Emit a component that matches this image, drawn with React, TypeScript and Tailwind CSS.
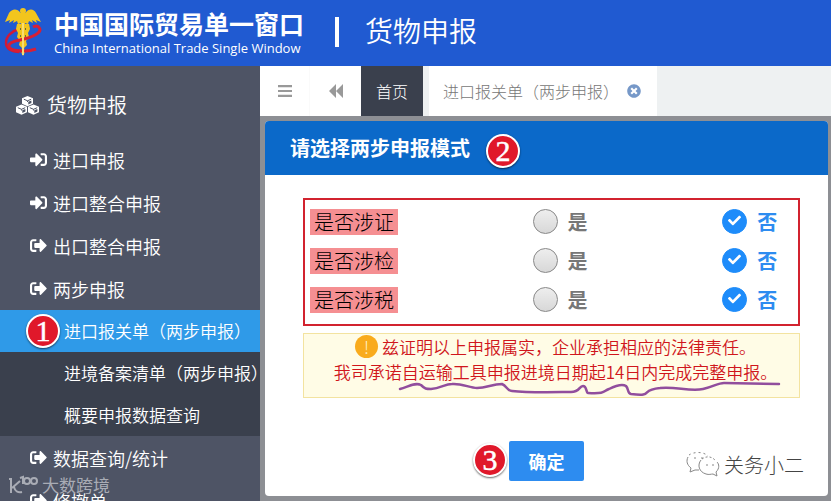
import { useState } from "react";
import { FaCheck, FaSignInAlt, FaSignOutAlt, FaTimesCircle } from "react-icons/fa";

const subMenu = ["进口报关单（两步申报）", "进境备案清单（两步申报）", "概要申报数据查询"];

const questions = [
    { id: "cert", label: "是否涉证" },
    { id: "inspection", label: "是否涉检" },
    { id: "tax", label: "是否涉税" },
];

const Logo = () => (
    <svg viewBox="0 0 38 50" className="w-[38px] h-[50px] shrink-0" fill="none">
        <path d="M15 22C8 24 2 29 2 36c0 6 6 9 13 9" stroke="#cf1a38" strokeWidth="2.5" />
        <path fill="#f2c51d" d="M16.500 6C13 1 8 2 5 6L1 15l5-2-1 3 5-3-1 3 4-2 1 3 3-1v6h4v-6l3 1 1-3 4 2-1-3 5 3-1-3 5 2-5-9C30 2 25 1 21.500 6z" />
        <circle cx="19" cy="4" r="3" fill="#f2c51d" />
        <path fill="#f2c51d" d="M13 17h12l1 5-2 4 1 4-3 4 1 4-3 3 1 4-2 4-2-4 1-4-3-3 1-4-3-4 1-4-2-4z" />
        <path d="M29 20c6-3 9 3 5 6-4 4-10 5-18 7-8 1-12 4-11 7 2 4 9 4 16 4 5 0 8-1 11-2" stroke="#d81f35" strokeWidth="3" />
        <path d="M16 22h1M21 22h1M16 29h1M21 29h1M19 36v2" stroke="#6a6a3c" strokeWidth="2" />
        <path d="M19 16v32" stroke="#f8dd72" strokeWidth="2" />
    </svg>
);

const Cube = ({ x, y }: { x: number, y: number }) => (
    <g transform={`translate(${x} ${y})`}>
        <path fill="white" d="M5.500 0L11 2.300V7.700L5.500 10.300L0 7.700V2.300z" />
        <path stroke="#4e5465" strokeWidth="1" d="M1.800 3.200L5.500 4.800L9.200 3.200M5.500 4.800V6" />
        <path fill="#4e5465" d="M6.300 5.800L9.400 4.500V7L6.300 8.500z" />
    </g>
);

const CubesIcon = () => (
    <svg viewBox="0 0 23 19" className="w-[23px] h-[19px]" fill="none">
        <Cube x={6} y={0} />
        <Cube x={0} y={8.5} />
        <Cube x={12} y={8.5} />
    </svg>
);

const Badge = ({ n, className }: { n: number, className: string }) => (
    <span className={`flex items-center justify-center w-[34px] h-[34px] rounded-full border-2 border-white bg-[#e0182a] text-white text-[30px] leading-none font-['Liberation_Serif',serif] shadow-[0_1px_2px_rgba(0,0,0,0.6)] [-webkit-text-stroke:0.5px_white] ${className}`}>{n}</span>
);

const WeChatIcon = () => (
    <svg viewBox="0 0 34 28" className="w-[34px] h-7" fill="none" stroke="#888" strokeWidth="1">
        <path d="M2 6C0 10 1 14 5 17l-1 4 5-2 4 0" />
        <path d="M3 4C7 1 17 0 22 5" strokeDasharray="2 3" />
        <path d="M15 9c-4 5-2 12 5 14 3 1 5 0 7 0l4 2-1-4c4-4 3-8 1-10" />
        <path d="M16 8c4-3 9-3 13 1" strokeDasharray="2 2" />
        <path d="M8 7h2M15 7h2M20 14h2M26 14h2" />
    </svg>
);

const MenuItem = ({ label, out }: { label: string, out?: boolean }) => (
    <a href="#" className="flex items-center gap-1.5 h-[43px] pl-[30px] text-lg font-[350] whitespace-nowrap">
        {out ? <FaSignOutAlt className="w-[17px] h-[17px]" /> : <FaSignInAlt className="w-[17px] h-[17px]" />}
        {label}
    </a>
);

const Sidebar = () => (
    <aside className="w-[260px] shrink-0 bg-[#4e5465] text-white overflow-hidden">
        <h2 className="flex items-center gap-2 h-[72px] pt-1.5 pl-4 text-xl font-[350]">
            <CubesIcon />
            货物申报
        </h2>
        <nav>
            <MenuItem label="进口申报" />
            <MenuItem label="进口整合申报" />
            <MenuItem label="出口整合申报" out />
            <MenuItem label="两步申报" out />
            <ul className="bg-[#3a404d]">
                {subMenu.map((label, i) => (
                    <li key={label} className={i === 0 ? "relative bg-[#2f9ae8]" : ""}>
                        {i === 0 && <Badge n={1} className="absolute left-[26px] top-1" />}
                        <a href="#" className="flex items-center h-[42px] pl-16 text-[17px] font-[350] whitespace-nowrap">{label}</a>
                    </li>
                ))}
            </ul>
            <MenuItem label="数据查询/统计" out />
            <MenuItem label="修撤单" out />
        </nav>
    </aside>
);

const Tabs = () => (
    <div className="flex h-[50px] shrink-0 bg-[#eef1f2] text-base text-[#777]">
        <button aria-label="菜单" className="flex items-center justify-center w-[50px] bg-white border-r border-[#fafafa]">
            <svg viewBox="0 0 14 12" className="w-3.5 h-3" fill="#999">
                <path d="M0 0h14v2.200H0zM0 4.900h14v2.200H0zM0 9.800h14V12H0z" />
            </svg>
        </button>
        <button aria-label="向左" className="flex items-center justify-center w-[51px] bg-white">
            <svg viewBox="0 0 14 14" className="w-3.5 h-3.5" fill="#999">
                <path d="M7 0v14L0 7zM14 0v14L7 7z" />
            </svg>
        </button>
        <button className="px-[15px] bg-[#3a404d] font-light text-white">首页</button>
        <div className="flex items-center gap-2 ml-1.5 pl-3.5 pr-4 bg-white font-light whitespace-nowrap">
            <a href="#">进口报关单（两步申报）</a>
            <button aria-label="关闭" className="text-[#7698c8]"><FaTimesCircle className="w-3.5 h-3.5" /></button>
        </div>
    </div>
);

const Option = ({ name, label, checked, onChange }: { name: string, label: string, checked: boolean, onChange: () => void }) => (
    <label className={`flex items-center gap-2.5 text-xl font-bold ${checked ? "text-[#2d8cf0]" : "text-[#777]"}`}>
        <span className="relative flex">
            <input
                type="radio"
                name={name}
                checked={checked}
                onChange={onChange}
                className="appearance-none w-[25px] h-[25px] rounded-full border border-[#888] bg-linear-to-b from-[#eee] to-[#d8d8d8] checked:border-[#1e8cfa] checked:bg-none checked:bg-[#1e8cfa]"
            />
            {checked && <FaCheck className="absolute left-1.5 top-[5px] w-[13px] h-[13px] text-white pointer-events-none" />}
        </span>
        {label}
    </label>
);

const Dialog = () => {
    const [answers, setAnswers] = useState<Record<string, boolean>>({ cert: false, inspection: false, tax: false });

    return (
        <section className="relative flex-1 flex flex-col rounded-sm bg-white overflow-hidden">
            <header className="flex items-center gap-4 h-[54px] pl-[25px] bg-[#0b69c9] text-white">
                <h1 className="text-xl font-bold">请选择两步申报模式</h1>
                <Badge n={2} className="mt-1.5" />
            </header>

            <form className="pt-[23px] pl-[38px] pr-7" onSubmit={(e) => e.preventDefault()}>
                <div className="border-2 border-[#d2232f] pt-0.5 pb-[5px]">
                    {questions.map((q) => (
                        <div key={q.id} role="radiogroup" aria-label={q.label} className="grid grid-cols-[6fr_5fr_2fr] items-center h-[39px]">
                            <div className="flex pl-[5px]">
                                <span className="px-1 bg-[#f58f92] text-xl leading-[26px] font-light text-black">{q.label}</span>
                            </div>
                            <Option name={q.id} label="是" checked={answers[q.id]} onChange={() => setAnswers({ ...answers, [q.id]: true })} />
                            <Option name={q.id} label="否" checked={!answers[q.id]} onChange={() => setAnswers({ ...answers, [q.id]: false })} />
                        </div>
                    ))}
                </div>

                <div className="relative mt-[7px] pb-[13px] pl-2 border border-[#f3e3a0] bg-[#fffce6] text-center text-[17px] leading-[25px] font-[350] text-[#d0161c] whitespace-nowrap">
                    <p className="flex items-center justify-center gap-1">
                        <span className="flex items-center justify-center w-[23px] h-[23px] rounded-full bg-[#f9ab1c] font-light text-[#fff3d0]">!</span>
                        兹证明以上申报属实，企业承担相应的法律责任。
                    </p>
                    <p>我司承诺自运输工具申报进境日期起14日内完成完整申报。</p>
                    {/* Traço à mão livre sob o compromisso */}
                    <svg viewBox="398 380 383 18" className="absolute left-[94px] top-[46px] w-[383px] h-[18px]" fill="none" stroke="#914e9d" strokeWidth="2.5" strokeLinecap="round">
                        <path d="M400 389C408 387 415 382 421 385C425 389 426 389 431 389C441 388 445 384 452 384C461 383 470 388 477 388C487 388 492 384 502 384C507 386 507 391 512 391C530 393 560 392 571 392C580 392 579 386 583 386C587 386 586 393 588 393C607 394 603 391 609 389C617 385 623 384 626 386C629 389 627 393 631 394C655 397 639 390 660 388C675 386 690 392 703 389C713 387 718 383 724 383L779 384" />
                    </svg>
                </div>

                <div className="flex justify-center pt-[43px] pr-2.5">
                    <div className="relative">
                        <Badge n={3} className="absolute -left-9 top-0.5" />
                        <button type="submit" className="h-10 w-[75px] rounded-xs bg-[#2d8cf0] text-lg font-bold text-white">确定</button>
                    </div>
                </div>
            </form>

            <div className="absolute right-6 bottom-[17px] flex items-center gap-1 text-xl font-light text-[#444]">
                <WeChatIcon />
                关务小二
            </div>
        </section>
    );
};

export default function App() {
    return (
        <div className="relative flex flex-col h-screen overflow-hidden font-['Noto_Sans_CJK_SC',sans-serif]">
            <header className="flex items-center h-[66px] shrink-0 pl-1 pb-0.5 bg-[#205ad1] text-white whitespace-nowrap">
                <Logo />
                <div className="ml-3">
                    <p className="text-[25px] leading-8 font-bold">中国国际贸易单一窗口</p>
                    <p className="text-[13px] leading-[18px] font-['Open_Sans',sans-serif]">China International Trade Single Window</p>
                </div>
                <span className="w-1 h-[30px] ml-[31px] bg-white" />
                <span className="ml-[26px] pb-1 text-[28px] leading-8 font-[350]">货物申报</span>
            </header>

            <div className="flex flex-1 min-h-0">
                <Sidebar />
                <main className="flex flex-col flex-1 min-w-0">
                    <Tabs />
                    <div className="flex flex-1 min-h-0 pl-[5px] pr-[3px] py-[5px] bg-[#8d8f94]">
                        <Dialog />
                    </div>
                </main>
            </div>

            <div className="absolute left-2 bottom-1 flex items-center gap-1 text-[17px] leading-6 text-[#a9acb5]">
                <svg viewBox="0 0 30 20" className="w-[30px] h-5" fill="none" stroke="currentColor" strokeWidth="2">
                    <path d="M1 4h2v14M12 6l-8 7M6 12c1 4 4 6 8 5M12 3l3-1v7" />
                    <circle cx="19" cy="6" r="3" />
                    <circle cx="26" cy="6" r="3" />
                </svg>
                大数跨境
            </div>
        </div>
    );
}
